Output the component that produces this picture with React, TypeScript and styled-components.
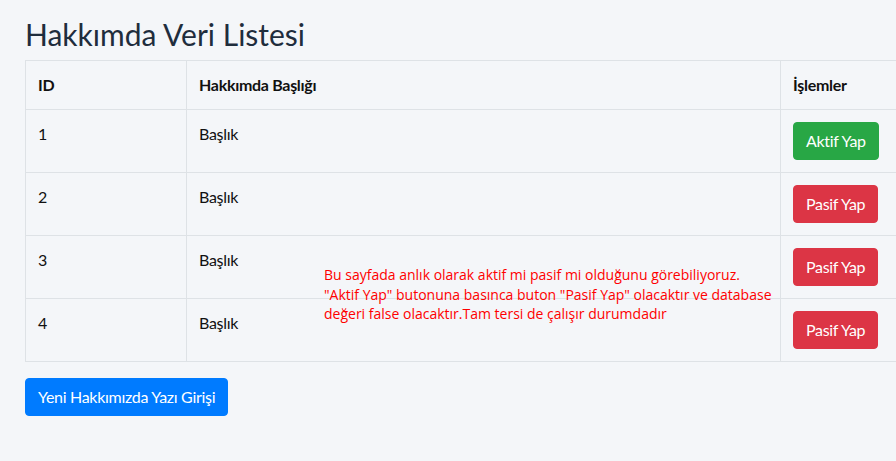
import React from 'react'
import styled, { createGlobalStyle } from 'styled-components'

const Global = createGlobalStyle`
  html, body {
    margin: 0;
    padding: 0;
    overflow: hidden;
    background: #f4f6f9;
  }
  body {
    font-family: Lato, "Liberation Sans", sans-serif;
    font-size: 16px;
    letter-spacing: -0.3px;
    color: #111;
  }
`

const Page = styled.div`
  position: relative;
  padding: 16px 0 0 25px;
  height: 461px;
  box-sizing: border-box;
`

const Title = styled.h1`
  margin: 0 0 8px 0;
  font-size: 30px;
  font-weight: 400;
  line-height: 1.2;
  letter-spacing: 0;
  color: #1f2d3d;
`

const Table = styled.table`
  border-collapse: collapse;
  table-layout: fixed;
  width: 900px;
  margin-bottom: 16px;
`

const HeadCell = styled.th`
  text-align: left;
  font-weight: 700;
  padding: 12px;
  line-height: 24px;
  border: 1px solid #dee2e6;
  vertical-align: bottom;
`

const Cell = styled.td`
  padding: 12px;
  line-height: 24px;
  border: 1px solid #dee2e6;
  vertical-align: top;
`

type Variant = 'success' | 'danger' | 'primary'

const COLORS: Record<Variant, string> = {
  success: '#28a745',
  danger: '#dc3545',
  primary: '#007bff',
}

const Button = styled.button<{ $variant: Variant }>`
  font-family: inherit;
  font-size: 16px;
  letter-spacing: inherit;
  line-height: 24px;
  padding: 6px 12px;
  border-radius: 4px;
  color: #fff;
  cursor: pointer;
  background: ${p => COLORS[p.$variant]};
  border: 1px solid ${p => COLORS[p.$variant]};
`

const Note = styled.p`
  position: absolute;
  left: 324px;
  top: 265px;
  margin: 0;
  color: #ff0000;
  font-family: "Open Sans", sans-serif;
  font-size: 14px;
  letter-spacing: 0;
  line-height: 19.5px;
`

const rows = [
  { id: 1, title: 'Başlık', active: false },
  { id: 2, title: 'Başlık', active: true },
  { id: 3, title: 'Başlık', active: true },
  { id: 4, title: 'Başlık', active: true },
]

function App() {
  return (<Page>
    <Global />
    <Title>Hakkımda Veri Listesi</Title>
    <Table>
      <colgroup>
        <col style={{ width: 161 }} />
        <col style={{ width: 594 }} />
        <col />
      </colgroup>
      <thead>
        <tr>
          <HeadCell>ID</HeadCell>
          <HeadCell>Hakkımda Başlığı</HeadCell>
          <HeadCell>İşlemler</HeadCell>
        </tr>
      </thead>
      <tbody>
        {rows.map(r => (<tr key={r.id}>
          <Cell>{r.id}</Cell>
          <Cell>{r.title}</Cell>
          <Cell>
            {r.active
              ? <Button $variant="danger">Pasif Yap</Button>
              : <Button $variant="success">Aktif Yap</Button>}
          </Cell>
        </tr>))}
      </tbody>
    </Table>
    <Button $variant="primary">Yeni Hakkımızda Yazı Girişi</Button>
    <Note>
      Bu sayfada anlık olarak aktif mi pasif mi olduğunu görebiliyoruz.<br />
      "Aktif Yap" butonuna basınca buton "Pasif Yap" olacaktır ve database<br />
      değeri false olacaktır.Tam tersi de çalışır durumdadır
    </Note>
  </Page>)
}

export default App
